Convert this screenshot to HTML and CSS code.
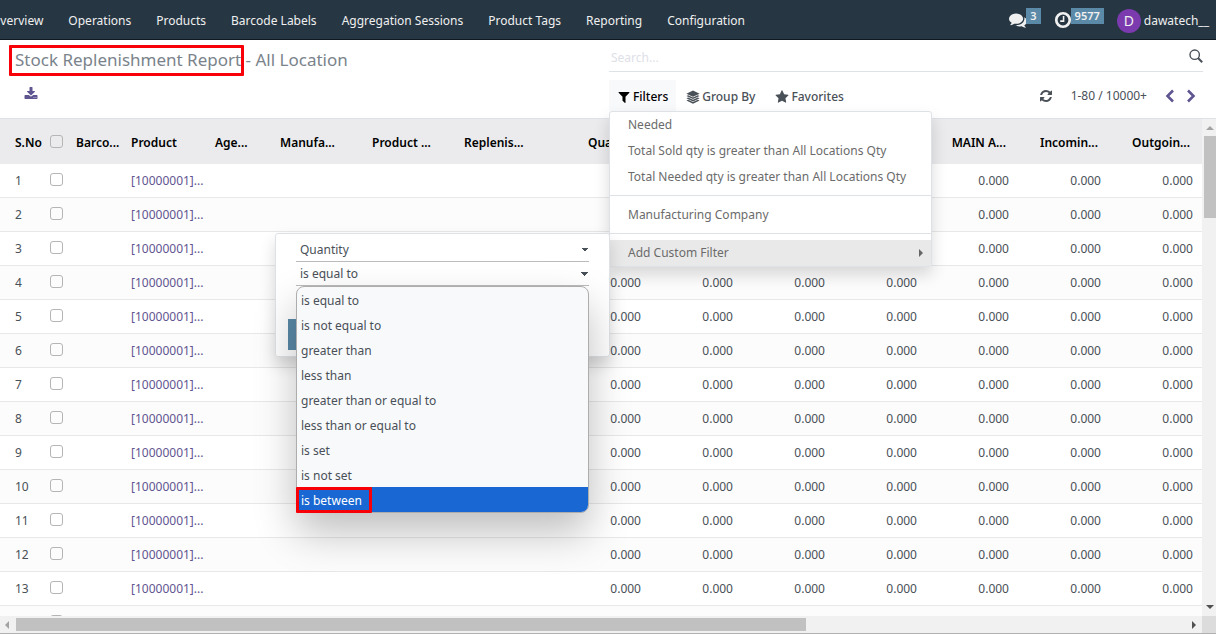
FILE: index.html
```
<!doctype html>
<html lang="en">

<head>
    <meta charset="utf-8">
    <title>Stock Replenishment Report - All Location</title>
    <meta name="viewport" content="width=device-width, initial-scale=1">
    <link rel="stylesheet" href="styles.css">
</head>

<body>
    <header class="navbar">
        <nav class="menu">
            <a href="#">Overview</a>
            <a href="#">Operations</a>
            <a href="#">Products</a>
            <a href="#">Barcode Labels</a>
            <a href="#">Aggregation Sessions</a>
            <a href="#">Product Tags</a>
            <a href="#">Reporting</a>
            <a href="#">Configuration</a>
        </nav>
        <div class="systray">
            <button class="tray-btn" aria-label="Messages">
                <svg class="tray-icon" viewBox="0 0 1792 1792"><path fill="currentColor" d="M1408 768q0 139-94 257t-256.5 186.5-353.5 68.5q-86 0-176-16-124 88-278 128-36 9-86 16h-3q-11 0-20.5-8t-11.5-21q-1-3-1-6.5t.5-6.5 2-6l2.5-5 3.5-5.5 4-5 4.5-5 4-4.5q5-6 23-25t26-29.5 22.5-29 25-38.5 20.5-44q-124-72-195-177t-71-224q0-139 94-257t256.5-186.5 353.5-68.5 353.5 68.5 256.5 186.5 94 257zm384 256q0 120-71 224.5t-195 176.5q10 24 20.5 44t25 38.5 22.5 29 26 29.5 23 25q1 1 4 4.5t4.5 5 4 5 3.5 5.5l2.5 5 2 6 .5 6.5-1 6.5q-3 14-13 22t-22 7q-50-7-86-16-154-40-278-128-90 16-176 16-271 0-472-132 58 4 88 4 161 0 309-45t264-129q125-92 192-212t67-254q0-77-23-152 129 71 204 178t75 230z"/></svg>
                <span class="badge">3</span>
            </button>
            <button class="tray-btn" aria-label="Activities">
                <svg class="tray-icon" viewBox="0 0 16 16" fill="none" stroke="currentColor"><circle cx="8" cy="8" r="6" stroke-width="2.4"/><path d="M8.5 4.5v4.5h-3" stroke-width="1.4"/></svg>
                <span class="badge">9577</span>
            </button>
            <button class="user"><span class="avatar">D</span>dawatech__</button>
        </div>
    </header>

    <div class="control-panel">
        <div class="cp-left">
            <h1 class="title"><span class="marked">Stock Replenishment Report</span> - All Location</h1>
            <button class="export" aria-label="Export">
                <svg viewBox="0 0 1792 1792"><path fill="currentColor" d="M1344 1344q0-26-19-45t-45-19-45 19-19 45 19 45 45 19 45-19 19-45zm256 0q0-26-19-45t-45-19-45 19-19 45 19 45 45 19 45-19 19-45zm128-224v320q0 40-28 68t-68 28h-1472q-40 0-68-28t-28-68v-320q0-40 28-68t68-28h465l135 136q58 56 136 56t136-56l136-136h464q40 0 68 28t28 68zm-325-569q17 41-14 70l-448 448q-18 19-45 19t-45-19l-448-448q-31-29-14-70 17-39 59-39h256v-448q0-26 19-45t45-19h256q26 0 45 19t19 45v448h256q42 0 59 39z"/></svg>
            </button>
        </div>
        <div class="cp-right">
            <div class="search">
                <input type="text" placeholder="Search..." aria-label="Search">
                <svg class="search-icon" viewBox="0 0 14 14" fill="none" stroke="currentColor"><circle cx="5.7" cy="5.7" r="4.7" stroke-width="1.4"/><path d="M9 9l4.2 4.2" stroke-width="2"/></svg>
            </div>
            <div class="tools">
                <div class="filter-group">
                    <button class="tool open">
                        <svg viewBox="0 0 1792 1792"><path fill="currentColor" d="M1595 295q17 41-14 70l-493 493v742q0 42-39 59-13 5-25 5-27 0-45-19l-256-256q-19-19-19-45v-486l-493-493q-31-29-14-70 17-39 59-39h1280q42 0 59 39z"/></svg>Filters
                    </button>
                    <div class="dropdown">
                        <a href="#">Needed</a>
                        <a href="#">Total Sold qty is greater than All Locations Qty</a>
                        <a href="#">Total Needed qty is greater than All Locations Qty</a>
                        <hr>
                        <a href="#">Manufacturing Company</a>
                        <hr>
                        <a href="#" class="active">Add Custom Filter<span class="caret-right"></span></a>

                        <div class="custom-filter">
                            <select aria-label="Field">
                                <option>Quantity</option>
                            </select>
                            <div class="operator">
                                <select aria-label="Operator">
                                    <option>is equal to</option>
                                </select>
                                <ul class="options" role="listbox" aria-label="Operator options">
                                    <li role="option">is equal to</li>
                                    <li role="option">is not equal to</li>
                                    <li role="option">greater than</li>
                                    <li role="option">less than</li>
                                    <li role="option">greater than or equal to</li>
                                    <li role="option">less than or equal to</li>
                                    <li role="option">is set</li>
                                    <li role="option">is not set</li>
                                    <li role="option" class="hover"><span class="marked">is between</span></li>
                                </ul>
                            </div>
                            <input type="text" class="value" aria-label="Value">
                            <button class="apply" aria-label="Apply"></button>
                        </div>
                    </div>
                </div>
                <button class="tool">
                    <svg viewBox="0 0 14 14" fill="currentColor"><path d="M7 0.6l6.6 3.1L7 6.8 0.4 3.7z"/><path d="M0.4 6l1.8-.8L7 7.5l4.8-2.3 1.8.8L7 9.1z"/><path d="M0.4 8.3l1.8-.8L7 9.8l4.8-2.3 1.8.8L7 11.4z"/><path d="M0.4 10.6l1.8-.8L7 12.1l4.8-2.3 1.8.8L7 13.7z"/></svg>Group By
                </button>
                <button class="tool">
                    <svg viewBox="0 0 1792 1792"><path fill="currentColor" d="M1728 647q0 22-26 48l-363 354 86 500q1 7 1 20 0 21-10.5 35.5t-30.5 14.5q-19 0-40-12l-449-236-449 236q-22 12-40 12-21 0-31.5-14.5t-10.5-35.5q0-6 2-20l86-500-364-354q-25-27-25-48 0-37 56-46l502-73 225-455q19-41 49-41t49 41l225 455 502 73q56 9 56 46z"/></svg>Favorites
                </button>
                <div class="pager">
                    <button class="refresh" aria-label="Refresh">
                        <svg viewBox="0 0 1792 1792"><path fill="currentColor" d="M1639 1056q0 5-1 7-64 268-268 434.5t-478 166.5q-146 0-282.5-55t-243.5-157l-129 129q-19 19-45 19t-45-19-19-45v-448q0-26 19-45t45-19h448q26 0 45 19t19 45-19 45l-137 137q71 66 161 102t187 36q134 0 250-65t186-179q11-17 53-117 8-23 30-23h192q13 0 22.5 9.5t9.5 22.5zm25-800v448q0 26-19 45t-45 19h-448q-26 0-45-19t-19-45 19-45l138-138q-148-137-349-137-134 0-250 65t-186 179q-11 17-53 117-8 23-30 23h-199q-13 0-22.5-9.5t-9.5-22.5v-7q65-268 270-434.5t480-166.5q146 0 284 55.5t245 156.5l130-129q19-19 45-19t45 19 19 45z"/></svg>
                    </button>
                    <span class="range">1-80 / 10000+</span>
                    <button class="page-btn" aria-label="Previous"><svg viewBox="0 0 10 14" fill="none" stroke="currentColor" stroke-width="2.6"><path d="M8 1.5L2.5 7 8 12.5"/></svg></button>
                    <button class="page-btn" aria-label="Next"><svg viewBox="0 0 10 14" fill="none" stroke="currentColor" stroke-width="2.6"><path d="M2 1.5L7.5 7 2 12.5"/></svg></button>
                </div>
            </div>
        </div>
    </div>

    <main class="list">
        <div class="list-view">
            <table>
                <colgroup>
                    <col class="c-no"><col class="c-check"><col class="c-barcode"><col class="c-product"><col class="c-age">
                    <col class="c-text"><col class="c-text"><col class="c-replenish">
                    <col><col><col><col><col><col><col>
                </colgroup>
                <thead>
                    <tr>
                        <th class="no">S.No</th>
                        <th class="check"><input type="checkbox" aria-label="Select all"></th>
                        <th>Barco...</th>
                        <th>Product</th>
                        <th>Age...</th>
                        <th>Manufa...</th>
                        <th>Product ...</th>
                        <th>Replenis...</th>
                        <th class="num">Quanti...</th>
                        <th class="num"></th>
                        <th class="num"></th>
                        <th class="num"></th>
                        <th class="num">MAIN A...</th>
                        <th class="num">Incomin...</th>
                        <th class="num">Outgoin...</th>
                    </tr>
                </thead>
                <tbody></tbody>
            </table>
        </div>
        <div class="vscroll"><i class="arrow up"></i><div class="thumb"></div><i class="arrow down"></i></div>
        <div class="hscroll"><i class="arrow left"></i><div class="thumb-track"><div class="thumb"></div></div><i class="arrow right"></i></div>
        <div class="corner"></div>
    </main>

    <script>
    var body = document.querySelector('.list tbody')
    var html = ''
    for (var i = 1; i <= 14; i++) {
        html += '<tr><td class="no">' + i + '</td>'
        html += '<td class="check"><input type="checkbox" aria-label="Select row ' + i + '"></td>'
        html += '<td></td><td><a href="#">[10000001]...</a></td><td></td><td></td><td></td><td></td>'
        for (var j = 0; j < 7; j++) {
            html += '<td class="num">0.000</td>'
        }
        html += '</tr>'
    }
    body.innerHTML = html
    </script>
</body>

</html>
```
FILE: styles.css
```
* {
    box-sizing: border-box;
}

html,
body {
    height: 100%;
    margin: 0;
}

body {
    display: flex;
    flex-direction: column;
    overflow: hidden;
    background: #fff;
    color: #495057;
    font-family: "Noto Sans", "Open Sans", sans-serif;
    font-size: 12px;
    line-height: 18px;
}

a {
    color: inherit;
    text-decoration: none;
}

button,
input,
select {
    font: inherit;
    color: inherit;
    border: 0;
    padding: 0;
    background: none;
}

button {
    cursor: pointer;
}

svg {
    display: block;
}

.marked {
    position: relative;
}

.marked::after {
    content: "";
    position: absolute;
    border: 3px solid #f80008;
    border-radius: 1px;
}

/* top bar */
.navbar {
    display: flex;
    justify-content: space-between;
    align-items: center;
    flex: none;
    height: 40px;
    padding-top: 2px;
    background: #263643;
    border-bottom: 1px solid #10181f;
    color: #f0f0f0;
    overflow: hidden;
}

.menu {
    display: flex;
    gap: 25px;
    margin-left: -9px;
    white-space: nowrap;
}

.systray {
    display: flex;
    align-items: center;
    padding-right: 7px;
}

.tray-btn {
    display: flex;
    margin-right: 13px;
}

.tray-icon {
    width: 18px;
    height: 18px;
    margin-top: 3px;
}

.badge {
    height: 16px;
    margin-left: -1px;
    margin-bottom: 10px;
    padding: 0 4px;
    background: #5b8aa8;
    font-size: 11px;
    line-height: 16px;
    font-weight: 600;
}

.user {
    display: flex;
    align-items: center;
    gap: 3px;
}

.avatar {
    width: 24px;
    height: 24px;
    border-radius: 50%;
    background: #7b3aad;
    font-size: 14px;
    line-height: 24px;
}

/* control panel */
.control-panel {
    display: grid;
    grid-template-columns: 1fr 1fr;
    flex: none;
    height: 79px;
    border-bottom: 1px solid #dee2e6;
}

.cp-left {
    padding: 8px 15px;
}

.title {
    margin: 0;
    color: #7a838b;
    font-size: 17px;
    line-height: 24px;
    font-weight: 400;
    white-space: nowrap;
}

.title .marked::after {
    inset: -3px -3px -5px -6px;
}

.export {
    display: block;
    margin: 15px 9px;
    color: #5f5590;
}

.export svg {
    width: 14px;
    height: 14px;
}

.cp-right {
    padding: 0 13px 0 1px;
}

.search {
    display: flex;
    align-items: center;
    height: 32px;
    border-bottom: 1px solid #dee2e6;
}

.search input {
    flex: 1;
    padding: 4px 2px 0;
    outline: 0;
}

.search input::placeholder {
    color: #dee0e8;
}

.search-icon {
    width: 14px;
    height: 14px;
}

.tools {
    display: flex;
    align-items: center;
    margin-top: 8px;
}

.tool {
    display: flex;
    align-items: center;
    gap: 2px;
    height: 31px;
    padding: 2px 10px 0;
    font-weight: 500;
    white-space: nowrap;
}

.tool svg {
    width: 14px;
    height: 14px;
}

.tool.open {
    padding: 2px 8px 0;
    background: #f8f9fa;
    color: #000;
}

.pager {
    display: flex;
    align-items: center;
    margin-left: auto;
    padding-right: 7px;
}

.refresh svg {
    width: 14px;
    height: 14px;
}

.range {
    margin: 0 18px;
}

.page-btn {
    color: #5f5590;
}

.page-btn + .page-btn {
    margin-left: 11px;
}

.page-btn svg {
    width: 10px;
    height: 14px;
}

/* filter menu */
.filter-group {
    position: relative;
}

.dropdown {
    position: absolute;
    top: 100%;
    left: 0;
    z-index: 2;
    width: 323px;
    background: #fff;
    border: 1px solid #dee2e6;
    border-radius: 3px;
    box-shadow: 0 8px 16px rgba(0, 0, 0, .15);
    color: #6b6b6b;
}

.dropdown a {
    display: flex;
    justify-content: space-between;
    align-items: center;
    height: 26px;
    padding: 0 8px 0 18px;
    white-space: nowrap;
}

.dropdown hr {
    margin: 5px 0 6px;
    border: 0;
    border-top: 1px solid #dee2e6;
}

.dropdown .active {
    background: #e9e9e9;
}

.caret-right {
    border: 4px solid transparent;
    border-left-color: #666;
    border-right: 0;
}

.custom-filter {
    position: absolute;
    top: 121px;
    right: 100%;
    width: 335px;
    height: 124px;
    padding: 4px 20px;
    background: #fff;
    border: 1px solid #dee2e6;
    border-radius: 3px;
    box-shadow: 0 8px 16px rgba(0, 0, 0, .15);
    color: #495057;
}

.custom-filter select,
.custom-filter .value {
    display: block;
    width: 100%;
    height: 24px;
    padding: 0 4px;
    border-bottom: 1px solid #bbb;
    appearance: none;
    border-radius: 0;
}

/* two halves of the down arrow */
.custom-filter select {
    background: linear-gradient(45deg, transparent 50%, #495057 50%) no-repeat right 4px top 10px / 4px 4px, linear-gradient(-45deg, transparent 50%, #495057 50%) no-repeat right 0 top 10px / 4px 4px;
}

.operator {
    position: relative;
}

.options {
    position: absolute;
    top: 100%;
    left: 0;
    z-index: 3;
    width: 100%;
    margin: 0;
    padding: 0;
    list-style: none;
    background: #f8f9fb;
    border: 1px solid #adadad;
    border-radius: 8px;
    box-shadow: 0 20px 40px rgba(0, 0, 0, .25);
}

.options li {
    height: 25px;
    padding: 1px 4px 0;
    line-height: 25px;
}

.options .hover {
    background: #1967d2;
    border-radius: 0 0 7px 7px;
    color: #fff;
}

.options .marked {
    display: inline-block;
}

.options .marked::after {
    inset: -1px -10px 0 -5px;
}

.apply {
    width: 80px;
    height: 31px;
    margin: 9px -8px;
    background: #5b8aa8;
}

/* list */
.list {
    display: grid;
    grid-template-columns: minmax(0, 1fr) 14px;
    grid-template-rows: minmax(0, 1fr) 17px;
    flex: 1;
    min-height: 0;
    border-bottom: 1px solid #b0b0b0;
}

.list-view {
    overflow: hidden;
}

table {
    width: 100%;
    table-layout: fixed;
    border-collapse: separate;
    border-spacing: 0;
}

.c-no { width: 45px; }
.c-check { width: 23px; }
.c-barcode { width: 55px; }
.c-product { width: 84px; }
.c-age { width: 65px; }
.c-text { width: 92px; }
.c-replenish { width: 102px; }

th,
td {
    padding: 0 0 0 8px;
    text-align: left;
    white-space: nowrap;
}

th {
    height: 45px;
    padding-top: 3px;
    background: #ebebed;
    color: #000;
    font-weight: 600;
}

td {
    height: 34px;
    border-bottom: 1px solid #e6e8ea;
}

tbody tr:nth-child(even) {
    background: #fcfcfc;
}

td a {
    color: #5f5590;
}

.no {
    padding-left: 15px;
}

.check {
    padding-left: 5px;
}

.num {
    padding-right: 9px;
    text-align: right;
}

th.num {
    padding-right: 12px;
}

.check input {
    display: block;
    appearance: none;
    width: 13px;
    height: 13px;
    margin: 0 0 3px;
    border: 1px solid #b5b5b5;
    border-radius: 3px;
}

/* scrollbars */
.vscroll,
.hscroll {
    display: flex;
    align-items: center;
    background: #f1f1f1;
}

.vscroll {
    flex-direction: column;
    padding: 7px 0 7px 2px;
}

.vscroll .thumb {
    width: 12px;
    height: 82px;
    margin: 6px 0 auto;
    background: #c1c1c1;
}

.hscroll {
    padding: 0 6px 0 5px;
}

.thumb-track {
    flex: 1;
    margin: 0 14px 0 7px;
}

.hscroll .thumb {
    width: 68%;
    height: 13px;
    background: #c1c1c1;
}

.arrow {
    border: 4px solid transparent;
}

.up {
    border-top: 0;
    border-bottom-color: #a3a3a3;
}

.down {
    border-bottom: 0;
    border-top-color: #505050;
}

.left {
    border-left: 0;
    border-right-color: #a3a3a3;
}

.right {
    border-right: 0;
    border-left-color: #505050;
}

.corner {
    background: #dcdcdc;
}
```
